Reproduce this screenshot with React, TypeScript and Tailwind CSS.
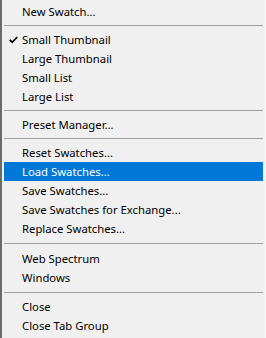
import React from "react";

type Entry =
  | { type: "item"; label: string; checked?: boolean; active?: boolean }
  | { type: "sep"; h: string };

const entries: Entry[] = [
  { type: "item", label: "New Swatch..." },
  { type: "sep", h: "h-[9px]" },
  { type: "item", label: "Small Thumbnail", checked: true },
  { type: "item", label: "Large Thumbnail" },
  { type: "item", label: "Small List" },
  { type: "item", label: "Large List" },
  { type: "sep", h: "h-[9px]" },
  { type: "item", label: "Preset Manager..." },
  { type: "sep", h: "h-[9px]" },
  { type: "item", label: "Reset Swatches..." },
  { type: "item", label: "Load Swatches...", active: true },
  { type: "item", label: "Save Swatches..." },
  { type: "item", label: "Save Swatches for Exchange..." },
  { type: "item", label: "Replace Swatches..." },
  { type: "sep", h: "h-[11px]" },
  { type: "item", label: "Web Spectrum" },
  { type: "item", label: "Windows" },
  { type: "sep", h: "h-[10px]" },
  { type: "item", label: "Close" },
  { type: "item", label: "Close Tab Group" },
];

function Check() {
  return (
    <svg width="9" height="8" viewBox="0 0 9 8" className="absolute left-[5px] top-[6px]">
      <path d="M0.8 3.8 L3.2 6.3 L8.2 1" fill="none" stroke="#000" strokeWidth="1.8" />
    </svg>
  );
}

export default function App() {
  return (
    <div
      className="w-[266px] h-[338px] bg-[#f0f0f0] border-l-2 border-l-[#6b6b6b] border-r border-r-[#fbfbfb] pt-[2px] pl-[2px] pr-[2px] flex flex-col text-[11.3px] text-black"
      style={{ fontFamily: '"Noto Sans", "Open Sans", sans-serif' }}
    >
      {entries.map((e, i) =>
        e.type === "sep" ? (
          <div key={i} className={`${e.h} flex items-center`}>
            <div className="w-full h-px bg-[#a0a0a0]" />
          </div>
        ) : (
          <div
            key={i}
            className={`relative h-[19px] flex items-center pl-[18px] pt-px leading-none ${
              e.active ? "bg-[#0078d7] text-white" : ""
            }`}
          >
            {e.checked && <Check />}
            <span>{e.label}</span>
          </div>
        )
      )}
    </div>
  );
}
